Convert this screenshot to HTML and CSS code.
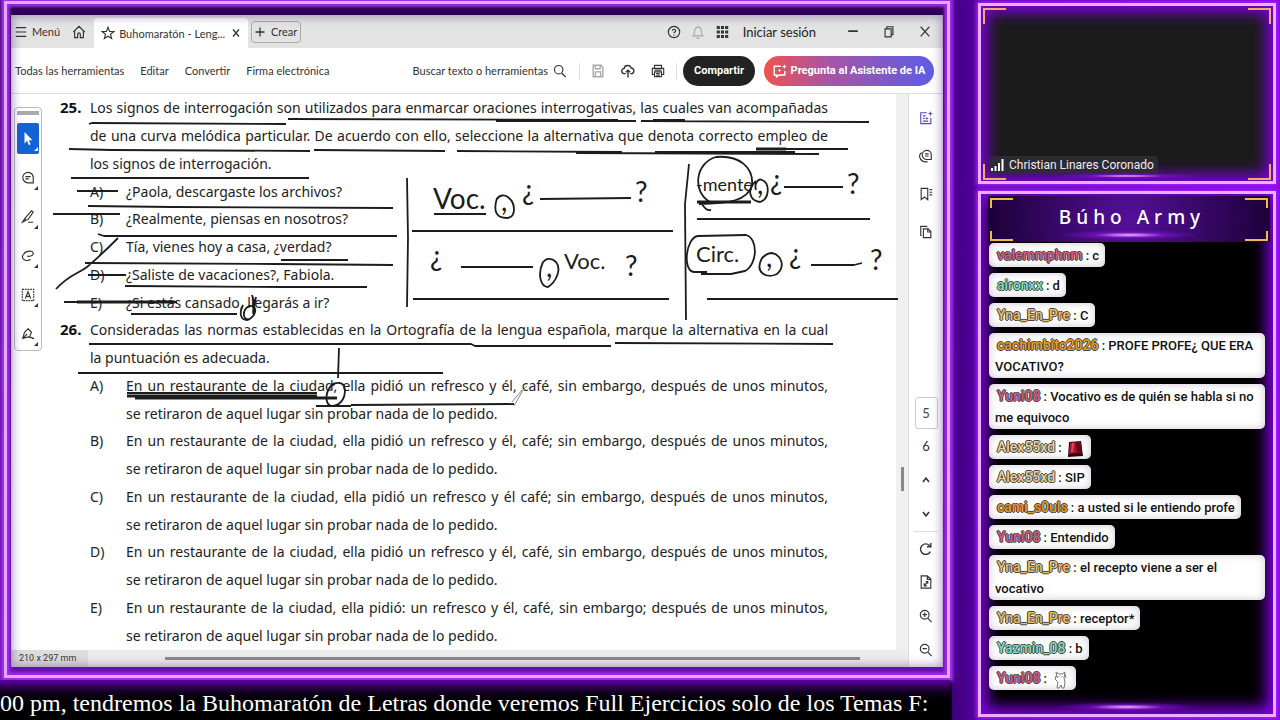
FILE: index.html
```html
<!DOCTYPE html>
<html lang="es">
<head>
    <meta charset="UTF-8">
    <meta name="viewport" content="width=device-width, initial-scale=1.0">
    <title>Buhomaratón - Lenguaje</title>
    <link rel="stylesheet" href="styles.css">
</head>
<body>
    <main class="stage">
        <section class="frame">
            <div class="window">
                <header class="tabbar">
                    <button class="menu-btn"><svg class="icon" viewBox="0 0 16 16"><path d="M2 3h12M2 8h12M2 13h12"/></svg>Menú</button>
                    <button class="home-btn" aria-label="Inicio"><svg class="icon" viewBox="0 0 16 16"><path d="M1.5 8 8 1.5 14.500 8M3 7v7.500h3.500v-4a1.500 1.500 0 0 1 3 0v4H13V7"/></svg></button>
                    <div class="tab">
                        <svg class="icon" viewBox="0 0 16 16"><path d="m8 1.500 1.800 4.600 5 .3-3.900 3.100 1.300 4.900L8 11.700l-4.200 2.700 1.300-4.900L1.200 6.400l5-.3z"/></svg>
                        <span class="tab-title">Buhomaratón - Leng...</span>
                        <button class="tab-close" aria-label="Cerrar pestaña"><svg class="icon small" viewBox="0 0 10 10"><path d="m2 1.500 6 7M8 1.500l-6 7"/></svg></button>
                    </div>
                    <button class="create-btn"><svg class="icon small" viewBox="0 0 10 10"><path d="M5 .5v9M.5 5h9"/></svg>Crear</button>
                    <div class="account">
                        <button aria-label="Ayuda"><svg class="icon" viewBox="0 0 16 16"><circle cx="8" cy="8" r="6.500"/><path d="M6.200 6.500c0-2.300 3.600-2.200 3.600 0C9.800 8 8 8 8 9.500M8 11v1.200"/></svg></button>
                        <button class="muted" aria-label="Notificaciones"><svg class="icon" viewBox="0 0 16 16"><path d="M2.500 12.500c1.500-1.500 1.500-3 1.500-5C4 4.500 5.500 2.500 8 2.500s4 2 4 5c0 2 0 3.500 1.500 5zM6.500 14.500c.8 1 2.200 1 3 0M8 1v1"/></svg></button>
                        <button aria-label="Aplicaciones"><svg class="icon solid" viewBox="0 0 16 16"><path d="M2 1h3.500v3.500H2zM6.800 1h3.500v3.500H6.800zM11.600 1h3.500v3.500h-3.500zM2 6.200h3.500v3.500H2zM6.800 6.200h3.500v3.500H6.800zM11.600 6.200h3.500v3.500h-3.500zM2 11.400h3.500v3.500H2zM6.800 11.400h3.500v3.500H6.800zM11.600 11.400h3.500v3.500h-3.500z"/></svg></button>
                        <a class="login" href="#">Iniciar sesión</a>
                    </div>
                    <div class="window-btns">
                        <button aria-label="Minimizar"><svg class="icon" viewBox="0 0 16 16"><path class="thick" d="M2.500 7h11"/></svg></button>
                        <button aria-label="Restaurar"><svg class="icon" viewBox="0 0 16 16"><path d="M3.500 4.500h7v9h-7zM5.500 4.500V2h7v9h-2"/></svg></button>
                        <button aria-label="Cerrar"><svg class="icon" viewBox="0 0 16 16"><path d="m3 2 10 11M13 2 3 13"/></svg></button>
                    </div>
                </header>

                <nav class="toolbar">
                    <a href="#">Todas las herramientas</a>
                    <a href="#">Editar</a>
                    <a href="#">Convertir</a>
                    <a href="#">Firma electrónica</a>
                    <div class="toolbar-right">
                        <button class="search-btn">Buscar texto o herramientas <svg class="icon" viewBox="0 0 16 16"><circle cx="6.500" cy="6.500" r="4.800"/><path class="mid" d="m10 10.500 4.500 4.500"/></svg></button>
                        <div class="file-btns">
                            <button class="muted" aria-label="Guardar"><svg class="icon" viewBox="0 0 16 16"><path class="mid" d="M2.500 1.500h9l2 2v11h-11zM5 1.500v4h5.500v-4M5 14v-5h6v5"/></svg></button>
                            <button aria-label="Subir"><svg class="icon" viewBox="0 0 16 16"><path class="mid" d="M5.500 11H4a3 3 0 0 1-.3-6C4 1 10.500.5 11.500 4.500c4 0 4.200 6.500.5 6.500h-1.500M8 15.500V7.500M5.500 9.500 8 7l2.500 2.500"/></svg></button>
                            <button aria-label="Imprimir"><svg class="icon" viewBox="0 0 16 16"><path d="M4 5V1.500h8V5M4 12H1.500V5h13v7H12M4 9h8v5.500H4zM6 11h4M6 12.800h4M4 7h8"/></svg></button>
                        </div>
                        <button class="share-btn">Compartir</button>
                        <button class="ai-btn"><svg class="icon" viewBox="0 0 16 16"><path class="mid" d="M9 2.500H1.500v10H4V15l3-2.500h6.500V8"/><path class="fill" d="m13 0 .8 2.200L16 3l-2.200.8L13 6l-.8-2.200L10 3l2.200-.8zM7.500 5.500l.6 1.400 1.400.6-1.400.6-.6 1.400-.6-1.400-1.400-.6 1.400-.6z"/></svg>Pregunta al Asistente de IA</button>
                    </div>
                </nav>

                <div class="workspace">
                    <aside class="palette">
                        <span class="grip"></span>
                        <button class="active" aria-label="Seleccionar"><svg class="icon" viewBox="0 0 16 16"><path class="fill" d="M4 0v13l3-3 2 5 2-1-2-4.500h4z"/></svg></button>
                        <button aria-label="Comentar"><svg class="icon" viewBox="0 0 16 16"><path d="M8 1.500a6 6 0 1 0 0 12h6V8a6 6 0 0 0-6-6.500zM5 6.500h6M5 9h4"/></svg></button>
                        <button aria-label="Resaltar"><svg class="icon" viewBox="0 0 16 16"><path d="m5 9 7-8 2 1.500-6 8.500-3.500 1zM4.500 9.500 1.500 14l4-2M8 14h6"/></svg></button>
                        <button aria-label="Dibujar"><svg class="icon" viewBox="0 0 16 16"><path d="M3 6c2-4 11-5 11-1 0 3-5 4-7 3M4 5c-5 4-1 9 4 8l3-1"/></svg></button>
                        <button aria-label="Texto"><svg class="icon" viewBox="0 0 16 16"><path class="dots" d="M1.500 1.500h13v13h-13z"/><path d="m5 12 3-8 3 8M6 9.500h4"/></svg></button>
                        <button aria-label="Firmar"><svg class="icon" viewBox="0 0 16 16"><path d="m2 13 2-7 4-4 4 4-2 5zM2 13l5-5M8 2l4 4M9 11c2 3 3-1 4 2h2"/></svg></button>
                    </aside>

                    <article class="sheet">
                        <div class="row statement"><b>25.</b><p class="full">Los signos de interrogación son utilizados para enmarcar oraciones interrogativas, las cuales van acompañadas</p></div>
                        <div class="row statement"><p class="full">de una curva melódica particular. De acuerdo con ello, seleccione la alternativa que denota correcto empleo de</p></div>
                        <div class="row statement"><p>los signos de interrogación.</p></div>
                        <div class="row option"><span>A)</span><p>¿Paola, descargaste los archivos?</p></div>
                        <div class="row option"><span>B)</span><p>¿Realmente, piensas en nosotros?</p></div>
                        <div class="row option"><span>C)</span><p>Tía, vienes hoy a casa, ¿verdad?</p></div>
                        <div class="row option"><span>D)</span><p>¿Saliste de vacaciones?, Fabiola.</p></div>
                        <div class="row option"><span>E)</span><p>¿Si estás cansado, llegarás a ir?</p></div>
                        <div class="row statement"><b>26.</b><p class="full">Consideradas las normas establecidas en la Ortografía de la lengua española, marque la alternativa en la cual</p></div>
                        <div class="row statement"><p>la puntuación es adecuada.</p></div>
                        <div class="row option"><span>A)</span><p class="full">En un restaurante de la ciudad, ella pidió un refresco y él, café, sin embargo, después de unos minutos,</p></div>
                        <div class="row option"><p>se retiraron de aquel lugar sin probar nada de lo pedido.</p></div>
                        <div class="row option"><span>B)</span><p class="full">En un restaurante de la ciudad, ella pidió un refresco y él, café; sin embargo, después de unos minutos,</p></div>
                        <div class="row option"><p>se retiraron de aquel lugar sin probar nada de lo pedido.</p></div>
                        <div class="row option"><span>C)</span><p class="full">En un restaurante de la ciudad, ella pidió un refresco y él café; sin embargo, después de unos minutos,</p></div>
                        <div class="row option"><p>se retiraron de aquel lugar sin probar nada de lo pedido.</p></div>
                        <div class="row option"><span>D)</span><p class="full">En un restaurante de la ciudad, ella pidió un refresco y él, café, sin embargo, después de unos minutos,</p></div>
                        <div class="row option"><p>se retiraron de aquel lugar sin probar nada de lo pedido.</p></div>
                        <div class="row option"><span>E)</span><p class="full">En un restaurante de la ciudad, ella pidió: un refresco y él, café, sin embargo; después de unos minutos,</p></div>
                        <div class="row option"><p>se retiraron de aquel lugar sin probar nada de lo pedido.</p></div>

                        <!-- pen annotations over the page -->
                        <svg class="ink" width="856" height="556" viewBox="44 94 856 556">
                            <path d="M89 124l3-1 194 1M288 119l330 1M496 121h140M641 121l228 1M653 120h32M69 149l43 1 198 1M314 150l131 1M457 151l165 1M576 153l243 1M655 152h140M756 149h92M71 178h238"/>
                            <path d="M77 191h41M53 214h67M88 206l84 1 221 1M98 234l6 2h293M56 289c14-15 22-15 31-22 12-10 22-20 31-29M85 263l190 1 118 1M281 260h67M88 275h38M125 286l158 1h84M64 302h113M131 314h106"/>
                            <path class="bold" d="M77 302h98M756 149h30M127 396h190M135 398h202"/>
                            <path d="M127 393h190M243 305c-5 10-1 15 4 15 9-2 12-16 2-14-7 4-7 15 1 13M252 295l2 6-1 12 3-16"/>
                            <path d="M89 344h382l4 2h136M615 343l218 1M78 373h365M339 348l-1 30M335 384c-10 2-12 23-2 22 9-1 14-11 11-20-2-4-8-4-13-1M316 406h35M351 405l163-1"/>
                            <path class="pen" d="m514 406 9-16 4-4M512 402l10-12"/>
                            <path d="M407 178l1 60-1 69M412 231h261M413 299h256M689 164l-4 40 1 116M697 219h173M707 299h191M434 214h52M540 199l91-1M461 267h72M784 187h59M811 265h43l8-2"/>
                            <path d="M497 198c-4 13-1 20 10 20 10-1 8-15 2-20-4-4-10-3-12 1M543 262c-6 13-2 25 5 25 8-5 14-18 8-25-5-5-11-4-14 2M756 181c-10 9-6 20 4 21 10-3 10-20 2-22-4-2-8 4-6 10M762 258c-8 15 5 21 15 16 9-8 4-19-5-21-4 0-7 2-10 5"/>
                            <path d="M710 202c-18-10-15-39 6-45 23-2 38 10 36 29-5 14-22 18-53 18M700 202c5 6 6 9 11 8M707 272h-13c-12-1-8-35 4-36l48-1c12 3 12 29-1 36l-14 3h-30"/>
                            <path class="bold" d="M697 202h54"/>
                            <g class="script">
                                <text x="433" y="209">Voc.</text>
                                <text x="501" y="211">,</text>
                                <text x="522" y="200">¿</text>
                                <text x="635" y="202">?</text>
                                <text x="430" y="266">¿</text>
                                <text x="546" y="277">,</text>
                                <text class="less" x="564" y="269">Voc.</text>
                                <text x="625" y="276">?</text>
                                <text class="least" x="696" y="191">-mente</text>
                                <text x="757" y="194">,</text>
                                <text x="770" y="190">¿</text>
                                <text x="847" y="194">?</text>
                                <text class="less" x="696" y="262">Circ.</text>
                                <text x="766" y="267">,</text>
                                <text x="789" y="264">¿</text>
                                <text x="870" y="270">?</text>
                            </g>
                        </svg>
                    </article>

                    <div class="vscroll"><span></span></div>

                    <aside class="rail">
                        <div class="rail-top">
                            <button class="violet" aria-label="Asistente"><svg class="icon" viewBox="0 0 16 16"><path d="M9 2H2v12.500h11.500V8M4.500 5.500h3M4.500 8.500h2M4.500 11.500h6"/><path class="fill" d="m13 0 .8 2.200L16 3l-2.200.8L13 6l-.8-2.200L10 3l2.200-.8zM9 6.500l.6 1.400 1.400.6-1.400.6L9 10.500l-.6-1.400L7 8.500l1.400-.6z"/></svg></button>
                            <button aria-label="Comentarios"><svg class="icon" viewBox="0 0 16 16"><path d="M9 1.500a5 5 0 1 0 0 10.500h5V6.500a5 5 0 0 0-5-5zM7 5.500h4M7 8h4M3 4c-5 4-1 12 7 10.500"/></svg></button>
                            <button aria-label="Marcadores"><svg class="icon" viewBox="0 0 16 16"><path d="M2.500 1.500h7.500v13l-3.700-3-3.800 3zM12 3h3M12 6h3M12 9h3"/></svg></button>
                            <button aria-label="Páginas"><svg class="icon" viewBox="0 0 16 16"><path d="M5 4.500h5.500l3 3v7H5zM10 4.500V8h3.500M3 12H2V1.500h6.500l1 1"/></svg></button>
                        </div>
                        <div class="rail-bottom">
                            <input class="page-input" type="text" value="5" aria-label="Página">
                            <span class="page-total">6</span>
                            <button aria-label="Anterior"><svg class="icon small" viewBox="0 0 10 10"><path class="mid" d="m2 7 3-4 3 4"/></svg></button>
                            <button aria-label="Siguiente"><svg class="icon small" viewBox="0 0 10 10"><path class="mid" d="m2 3 3 4 3-4"/></svg></button>
                            <button class="ruled" aria-label="Girar"><svg class="icon" viewBox="0 0 16 16"><path class="mid" d="M12.500 4.500A6 6 0 1 0 13 11M13.500 1v4.500H9"/></svg></button>
                            <button aria-label="Ajustar"><svg class="icon" viewBox="0 0 16 16"><path d="M2.500 1h7l4 3.500V15h-11zM9.500 1v4h4M6 9.500v3h3M10 10V7.500H7.500M6.500 12l3-4"/></svg></button>
                            <button aria-label="Acercar"><svg class="icon" viewBox="0 0 16 16"><circle cx="6.500" cy="6.500" r="5"/><path d="m10 10.500 4.500 4.500M4 6.500h5M6.500 4v5"/></svg></button>
                            <button aria-label="Alejar"><svg class="icon" viewBox="0 0 16 16"><circle cx="6.500" cy="6.500" r="5"/><path d="m10 10.500 4.500 4.500M4 6.500h5"/></svg></button>
                        </div>
                    </aside>

                    <footer class="hscroll"><small>210 x 297 mm</small><span></span></footer>
                </div>
            </div>
        </section>
        <div class="ticker">00 pm, tendremos la Buhomaratón de Letras donde veremos Full Ejercicios solo de los Temas F:</div>
    </main>

    <aside class="side">
        <section class="camera">
            <i class="corner tl"></i><i class="corner tr"></i><i class="corner bl"></i><i class="corner br"></i>
            <div class="speaker"><svg class="signal" viewBox="0 0 13 12"><path d="M1 9v3M4.500 7v5M8 4v8M11.500 0v12"/></svg>Christian Linares Coronado</div>
        </section>
        <section class="chat">
            <h1 class="chat-title"><i class="corner tl"></i><i class="corner tr"></i><i class="corner bl"></i><i class="corner br"></i>Búho Army</h1>
            <ul class="messages">
                <li><b class="pink">valemmphnm</b> : c</li>
                <li><b class="mint">aironxx</b> : d</li>
                <li><b class="sand">Yna_En_Pre</b> : C</li>
                <li><b class="amber">cachimbito2026</b> : PROFE PROFE¿ QUE ERA VOCATIVO?</li>
                <li><b class="pink">Yuni08</b> : Vocativo es de quién se habla si no me equivoco</li>
                <li><b class="cream">Alex55xd</b> : <svg class="emote" viewBox="0 0 20 18"><path fill="#2a0610" d="M4 2 16 1l2 15-15 1z"/><path fill="#b3122f" d="m5 3 6-1 1 11-8 1z"/><path fill="#e0486a" d="m7 3 2 0-1 9-2 0z"/><path fill="#650818" d="m12 2 4 0 1 12-5 0z"/></svg></li>
                <li><b class="cream">Alex55xd</b> : SIP</li>
                <li><b class="amber">cami_s0uls</b> : a usted si le entiendo profe</li>
                <li><b class="pink">Yuni08</b> : Entendido</li>
                <li><b class="sand">Yna_En_Pre</b> : el recepto viene a ser el vocativo</li>
                <li><b class="sand">Yna_En_Pre</b> : receptor*</li>
                <li><b class="mint">Yazmin_08</b> : b</li>
                <li><b class="pink">Yuni08</b> : <svg class="emote cat" viewBox="0 0 20 18"><path d="M7 6 6 1l3 2h3l3-2-1 6 1 4-1 6h-2l-1-3-2 3H7l1-6-3-3 1-3 2 2M9 5v1M12 5v1M15 3l1 4"/></svg></li>
            </ul>
        </section>
    </aside>
</body>
</html>
```

FILE: styles.css
```css
* {
    box-sizing: border-box;
}
body {
    margin: 0;
    min-height: 100vh;
    display: grid;
    grid-template-columns: minmax(0, 1fr) 328px;
    background: #000;
    font-family: Lato, "Liberation Sans", sans-serif;
    font-size: 11px;
    color: #333;
}
button {
    display: flex;
    align-items: center;
    justify-content: center;
    padding: 0;
    border: 0;
    background: none;
    color: inherit;
    font: inherit;
    cursor: pointer;
}
a {
    color: inherit;
    text-decoration: none;
}
.icon {
    width: 14px;
    height: 16px;
    flex: none;
    fill: none;
    stroke: currentColor;
    stroke-width: 1.3;
}
.icon.small {
    width: 10px;
    height: 10px;
}
.icon .mid {
    stroke-width: 1.6;
}
.icon .thick {
    stroke-width: 2;
}
.icon .dots {
    stroke-dasharray: 2 1;
}
.icon .fill,
.icon.solid {
    fill: currentColor;
    stroke: none;
}
.muted {
    color: #aaa;
}

/* left side: shared window and ticker */
.stage {
    display: flex;
    flex-direction: column;
    min-width: 0;
}
.frame {
    position: relative;
    flex: 1;
    display: flex;
    padding: 15px 9px 13px 11px;
    background: linear-gradient(#2a0050, #6a0cb0);
    box-shadow: 0 0 14px 4px #5a00a8;
}
.frame::after {
    content: "";
    position: absolute;
    inset: 1px 2px 2px 4px;
    border: 3px solid #e6a6ff;
    box-shadow: inset 0 0 3px 3px #9a2be6, 0 0 3px 3px #a030f0;
    pointer-events: none;
}
.window {
    position: relative;
    flex: 1;
    display: flex;
    flex-direction: column;
    min-width: 0;
    background: #fff;
}
.window::after {
    content: "";
    position: absolute;
    inset: 0;
    box-shadow: inset 0 0 10px 2px rgba(90, 60, 130, 0.45);
    pointer-events: none;
}
.tabbar {
    display: flex;
    align-items: center;
    height: 33px;
    padding: 0 11px 0 3px;
    background: #e3e3e3;
}
.menu-btn {
    gap: 4px;
}
.home-btn {
    margin: 0 8px 0 12px;
}
.tab {
    display: flex;
    align-items: center;
    align-self: flex-end;
    width: 154px;
    height: 30px;
    padding: 0 7px;
    background: #fff;
    border-radius: 4px 4px 0 0;
}
.tab-title {
    flex: 1;
    padding-left: 4px;
    white-space: nowrap;
}
.create-btn {
    gap: 6px;
    width: 50px;
    height: 22px;
    margin-left: 3px;
    border: 1px solid #aaa;
    border-radius: 4px;
}
.account {
    display: flex;
    align-items: center;
    gap: 10px;
    margin-left: auto;
}
.login {
    margin-left: 4px;
    font-size: 13px;
    color: #222;
}
.window-btns {
    display: flex;
    gap: 22px;
    margin-left: 30px;
}
.toolbar {
    display: flex;
    align-items: center;
    gap: 16px;
    height: 46px;
    padding: 0 9px 0 4px;
    border-bottom: 1px solid #ddd;
    white-space: nowrap;
}
.toolbar-right {
    display: flex;
    align-items: center;
    margin-left: auto;
}
.search-btn {
    gap: 5px;
}
.file-btns {
    display: flex;
    gap: 16px;
    margin: 0 6px 0 12px;
    padding: 0 11px;
    border: solid #ddd;
    border-width: 0 1px;
}
.share-btn,
.ai-btn {
    height: 30px;
    border-radius: 15px;
    background: #222;
    color: #fff;
    font-family: Roboto, sans-serif;
    font-weight: bold;
}
.share-btn {
    width: 72px;
}
.ai-btn {
    gap: 4px;
    width: 170px;
    margin-left: 9px;
    background: linear-gradient(90deg, #ef5350, #a455a8 40%, #5c5ce8);
}

.workspace {
    flex: 1;
    display: grid;
    grid-template-columns: 33px minmax(0, 1fr) 12px 35px;
    grid-template-rows: minmax(0, 1fr) 17px;
}
.palette {
    display: flex;
    flex-direction: column;
    align-items: center;
    align-self: start;
    gap: 8px;
    margin: 13px 2px 0 3px;
    padding: 3px 0 1px;
    border: 1px solid #bbb;
    border-radius: 4px;
}
.palette .grip {
    width: 22px;
    height: 4px;
    background: #aaa;
}
.palette button {
    position: relative;
    width: 22px;
    height: 31px;
}
.palette button::after {
    content: "";
    position: absolute;
    right: 1px;
    bottom: 3px;
    border: 2px solid transparent;
    border-right-color: currentColor;
    border-bottom-color: currentColor;
}
.palette .active {
    background: #1462d8;
    color: #fff;
    border-radius: 2px;
}
.sheet {
    position: relative;
    display: grid;
    grid-auto-rows: 1fr;
    padding: 0 68px 1px 16px;
    font-family: "Noto Sans", "Open Sans", sans-serif;
    font-size: 14px;
    color: #222;
}
.row {
    display: grid;
    grid-template-columns: 30px minmax(0, 1fr);
    align-items: center;
    line-height: 27px;
}
.row p {
    margin: 0;
    grid-column: -2;
    white-space: nowrap;
}
.row b {
    font-size: 15px;
    color: #111;
}
.row.option {
    grid-template-columns: 36px minmax(0, 1fr);
    padding-left: 30px;
}
.row .full {
    text-align: justify;
    text-align-last: justify;
}
.ink {
    position: absolute;
    top: 0;
    left: 0;
    fill: none;
    stroke: #1c1c1c;
    stroke-width: 1.8;
    stroke-linejoin: round;
}
.ink .bold {
    stroke-width: 3;
}
.ink .pen {
    stroke: #888;
    stroke-width: 1;
}
.script {
    font-family: Lato, sans-serif;
    font-size: 28px;
    fill: #1c1c1c;
    stroke: none;
}
.script .less {
    font-size: 22px;
}
.script .least {
    font-size: 18px;
}
.vscroll {
    display: flex;
    justify-content: center;
    background: #f0f0f0;
    padding-top: 373px;
}
.vscroll span {
    width: 3px;
    height: 24px;
    background: #888;
}
.rail {
    grid-row: span 2;
    display: flex;
    flex-direction: column;
    justify-content: space-between;
    border-left: 1px solid #ddd;
}
.rail-top,
.rail-bottom {
    display: flex;
    flex-direction: column;
    align-items: center;
}
.rail button {
    width: 24px;
    height: 34px;
}
.rail-top {
    gap: 4px;
    padding-top: 7px;
}
.rail .violet {
    color: #5548c0;
}
.rail .ruled {
    border-top: 1px solid #ddd;
}
.page-input {
    width: 23px;
    height: 32px;
    padding: 0;
    border: 1px solid #ccc;
    border-radius: 3px;
    background: #fff;
    color: #444;
    font: inherit;
    font-size: 13px;
    text-align: center;
}
.page-total {
    font-size: 13px;
    line-height: 34px;
}
.hscroll {
    grid-column: 1 / 4;
    grid-row: 2;
    display: flex;
    align-items: center;
    background: #ececec;
}
.hscroll small {
    width: 77px;
    padding-left: 8px;
    background: #ddd;
    font: 9px/17px Roboto, sans-serif;
}
.hscroll span {
    flex: 1;
    height: 3px;
    margin: 0 48px 0 77px;
    background: #888;
}
.ticker {
    position: relative;
    height: 40px;
    margin-right: 2px;
    overflow: hidden;
    background: linear-gradient(#5a00a0, #12001f 30%, #000 50%);
    color: #fff;
    font: 24px/46px "Liberation Serif", serif;
    white-space: nowrap;
}

/* right side: camera and chat */
.side {
    display: flex;
    flex-direction: column;
    gap: 7px;
    padding: 3px 4px 3px 26px;
    background: linear-gradient(90deg, #3c0078, #5600a0 8%, #8600e0);
}
.camera,
.chat {
    position: relative;
    border: 3px solid #eab0ff;
    background: #1b1b1b;
    box-shadow: 0 0 4px 2px #a020ff, inset 0 0 14px 7px #7a00d8;
}
.camera {
    height: 181px;
}
.camera::after,
.chat::after,
.chat-title::after {
    content: "";
    position: absolute;
    left: 25%;
    right: 25%;
    bottom: 2px;
    height: 10px;
    background: radial-gradient(closest-side, #f0b0ff, rgba(140, 20, 230, 0.5) 50%, transparent);
}
.camera::after {
    height: 6px;
}
.corner {
    position: absolute;
    width: 23px;
    height: 16px;
    border: 0 solid #f3ad5f;
}
.tl {
    top: 2px;
    left: 2px;
    border-width: 2px 0 0 2px;
}
.tr {
    top: 2px;
    right: 2px;
    border-width: 2px 2px 0 0;
}
.bl {
    bottom: 1px;
    left: 2px;
    border-width: 0 0 2px 2px;
}
.br {
    bottom: 1px;
    right: 2px;
    border-width: 0 2px 2px 0;
}
.speaker {
    position: absolute;
    left: 8px;
    bottom: 7px;
    display: flex;
    align-items: center;
    gap: 5px;
    padding: 0 4px 0 2px;
    background: rgba(50, 45, 55, 0.8);
    border-radius: 3px;
    font: 12px/18px Roboto, sans-serif;
    color: #eee;
}
.signal {
    width: 13px;
    height: 12px;
    stroke: #fff;
    stroke-width: 2;
}
.chat {
    flex: 1;
    background: #000;
    padding: 2px 3px 20px 7px;
}
.chat-title {
    position: relative;
    height: 46px;
    margin: 0;
    padding-left: 6px;
    background: radial-gradient(circle, #54109a, #1c0038);
    color: #fff;
    font: 500 19px/42px "Noto Sans", sans-serif;
    letter-spacing: 5px;
    text-align: center;
}
.chat-title .corner {
    height: 10px;
    border-color: #f0b850;
}
.messages {
    display: flex;
    flex-direction: column;
    align-items: flex-start;
    gap: 6px;
    margin: 0;
    padding: 1px 5px 0 1px;
    list-style: none;
    font: 500 13px/21px Roboto, sans-serif;
    color: #111;
}
.messages li {
    padding: 2px 6px 1px;
    border-radius: 5px;
    background: #fff;
    box-shadow: inset 0 0 8px rgba(90, 70, 110, 0.3);
}
.messages b {
    padding-left: 2px;
    font-size: 14px;
    font-weight: 500;
    text-shadow: 1px 0 #444, -1px 0 #444, 0 1px #444, 0 -1px #444;
}
.pink {
    color: #dc5a86;
}
.mint {
    color: #7ee0c0;
}
.sand {
    color: #f0bc62;
}
.amber {
    color: #f09a20;
}
.cream {
    color: #f0d09a;
}
.emote {
    width: 20px;
    height: 18px;
    vertical-align: middle;
}
.cat {
    fill: #fff;
    stroke: #777;
    stroke-width: 1;
}
```
